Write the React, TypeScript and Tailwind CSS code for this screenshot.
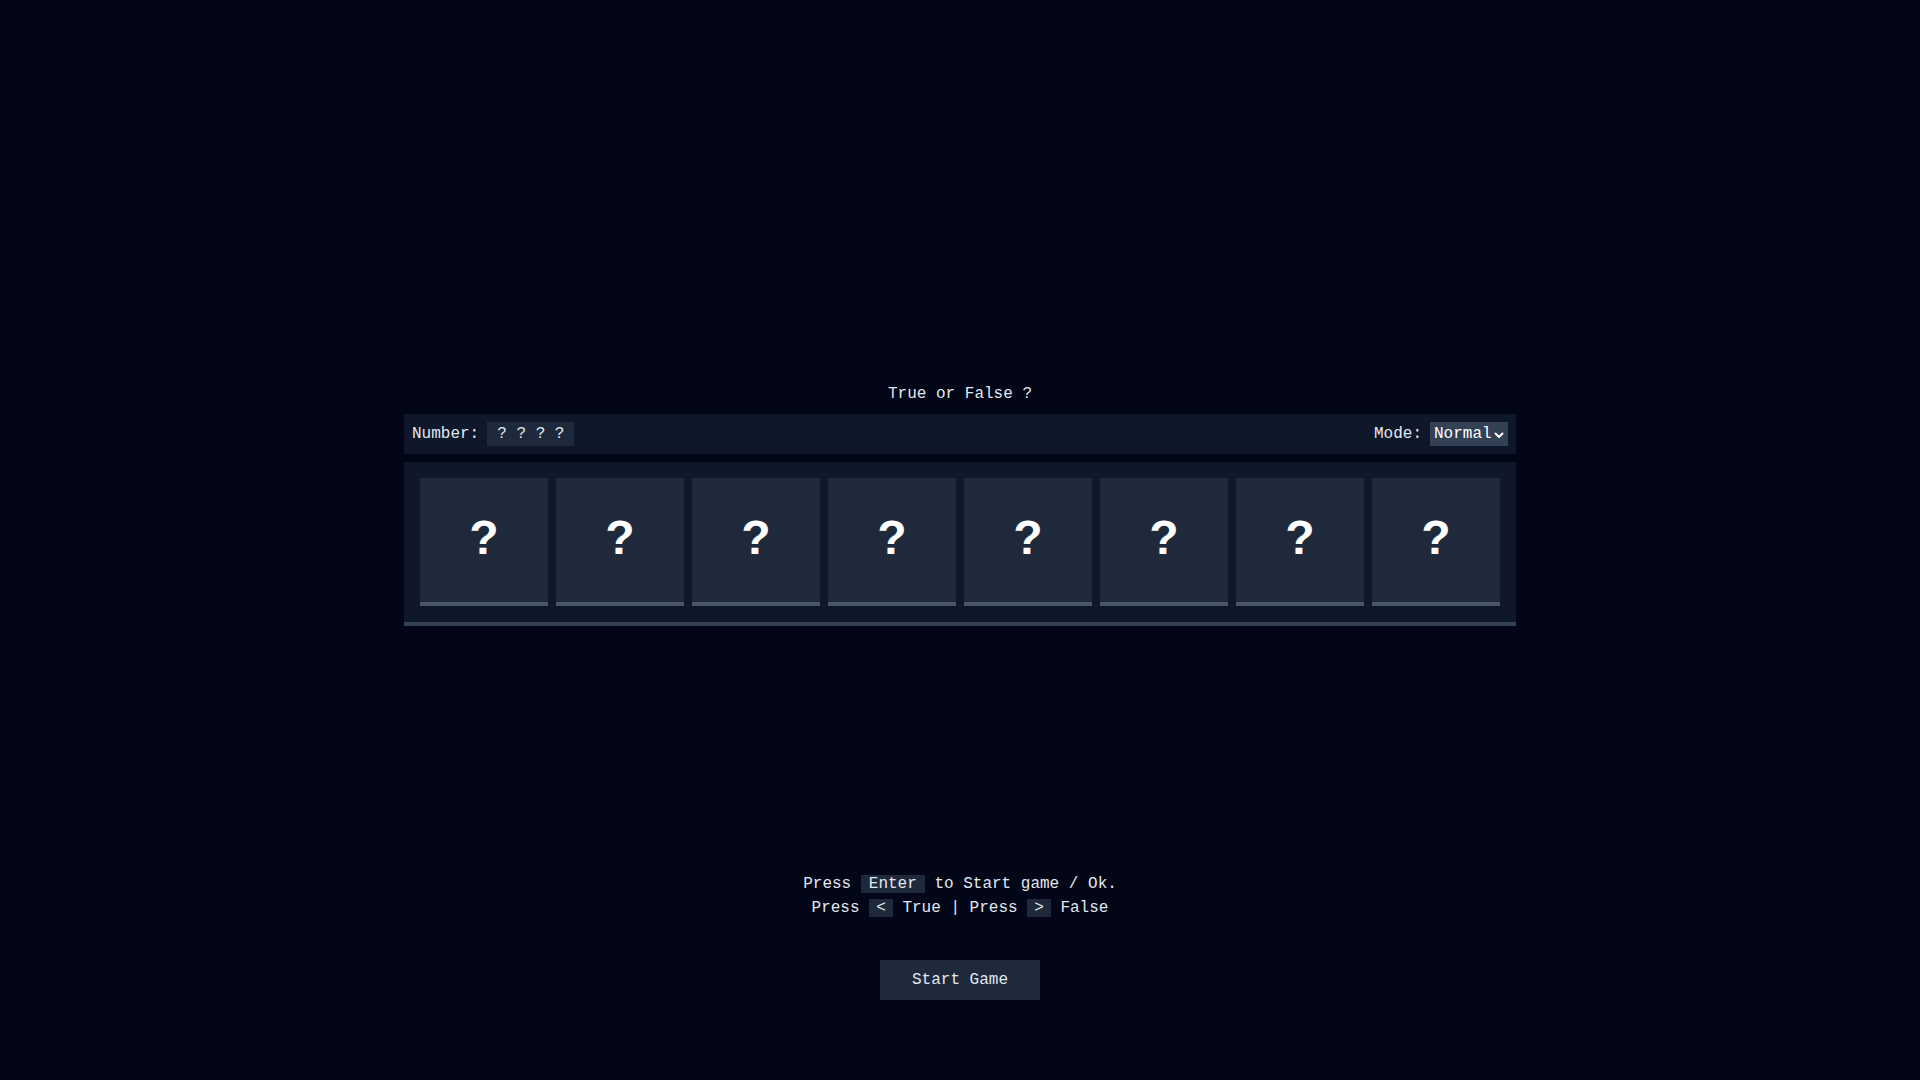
import React from "react";

const mono = { fontFamily: '"Liberation Mono", "Courier New", monospace' };

function Card() {
  return (
    <div className="w-[128px] h-[128px] bg-[#1e293b] border-b-4 border-[#475569] flex items-center justify-center">
      <span className="text-[48px] font-bold text-white leading-none font-['Liberation_Sans',Arial,sans-serif] -mt-[4px]">?</span>
    </div>
  );
}

export default function App() {
  return (
    <div
      className="min-h-screen w-full bg-[#020617] text-[#e2e8f0] text-[16px] leading-[24px] flex flex-col items-center pt-[382px] font-['Liberation_Mono','Courier_New',monospace]"
      style={mono}
    >
      <div className="h-[24px] mb-[8px] text-center">True or False ?</div>

      <div className="w-[1112px] h-[40px] bg-[#0f172a] flex items-center justify-between pl-2 pr-2">
        <div className="flex items-center gap-2">
          <span>Number:</span>
          <span className="h-6 w-[87px] bg-[#1e293b] pl-[10px] flex items-center">? ? ? ?</span>
        </div>
        <div className="flex items-center gap-2">
          <span>Mode:</span>
          <div className="h-6 w-[78px] bg-[#334155] pl-1 pr-1 flex items-center justify-between text-white">
            <span>Normal</span>
            <svg width="10" height="8" viewBox="0 0 10 8" className="mt-[1px]">
              <path d="M1.5 2.5 L5 6 L8.5 2.5" stroke="white" strokeWidth="2" fill="none" strokeLinecap="round" strokeLinejoin="round" />
            </svg>
          </div>
        </div>
      </div>

      <div className="w-[1112px] mt-2 bg-[#0f172a] border-b-4 border-[#334155] p-4 pb-4 flex gap-2">
        {Array.from({ length: 8 }).map((_, i) => (
          <Card key={i} />
        ))}
      </div>

      <div className="mt-[246px] flex flex-col items-center">
        <div className="whitespace-pre">
          Press <span className="bg-[#1e293b] px-2">Enter</span> to Start game / Ok.
        </div>
        <div className="whitespace-pre">
          Press <span className="bg-[#1e293b] px-[7px]">&lt;</span> True | Press <span className="bg-[#1e293b] px-[7px]">&gt;</span> False
        </div>
      </div>

      <button className="mt-[40px] w-[160px] h-[40px] bg-[#1e293b] text-[#e2e8f0] flex items-center justify-center" style={mono}>
        Start Game
      </button>
    </div>
  );
}
